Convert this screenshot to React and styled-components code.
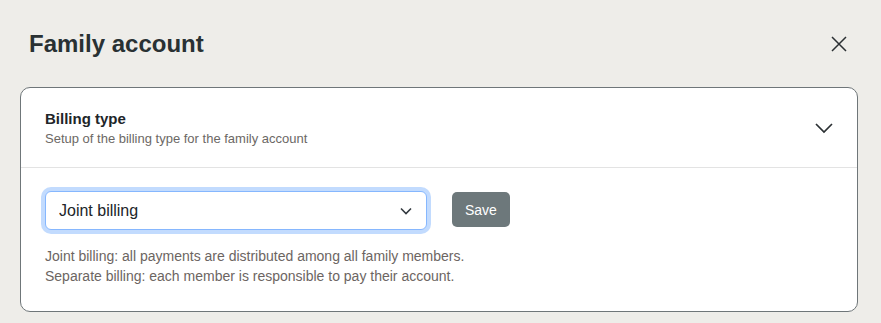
import React from 'react';
import styled, { createGlobalStyle } from 'styled-components';

const GlobalStyle = createGlobalStyle`
    body {
        margin: 0;
        background: #eeede9;
        font-family: 'Liberation Sans', Arial, sans-serif;
        color: #212529;
    }
`;

const Page = styled.div`
    padding: 0 23px 12px 20px;
`;

const TopBar = styled.header`
    display: flex;
    align-items: center;
    justify-content: space-between;
    height: 87px;
    padding: 0 9px 0 9px;
`;

const Title = styled.h1`
    margin: 0;
    font-size: 24px;
    font-weight: 700;
    color: #293133;
`;

const IconButton = styled.button`
    display: flex;
    align-items: center;
    justify-content: center;
    width: 20px;
    height: 20px;
    padding: 0;
    border: none;
    background: transparent;
    color: #2b3033;
    cursor: pointer;
`;

const Card = styled.section`
    background: #fff;
    border: 1px solid #6f7679;
    border-radius: 10px;
    overflow: hidden;
`;

const CardHeader = styled.div`
    display: flex;
    align-items: center;
    justify-content: space-between;
    height: 80px;
    padding: 0 24px;
    border-bottom: 1px solid #e3e3e3;
    box-sizing: border-box;
`;

const HeaderText = styled.div`
    display: flex;
    flex-direction: column;
    gap: 4px;
`;

const SectionTitle = styled.h2`
    margin: 0;
    font-size: 15px;
    font-weight: 700;
    color: #212529;
`;

const SectionHint = styled.p`
    margin: 0;
    font-size: 13px;
    color: #6c6865;
`;

const CardBody = styled.div`
    padding: 23px 24px 25px;
`;

const Row = styled.div`
    display: flex;
    align-items: flex-start;
    gap: 25px;
`;

const SelectWrap = styled.div`
    position: relative;
    width: 382px;
`;

const Select = styled.select`
    appearance: none;
    box-sizing: border-box;
    width: 100%;
    height: 39px;
    padding: 0 36px 0 13px;
    font-family: 'Liberation Sans', Arial, sans-serif;
    font-size: 16px;
    color: #212529;
    background: #fff;
    border: 1px solid #86b7fe;
    border-radius: 6px;
    box-shadow: 0 0 0 4px rgba(13, 110, 253, 0.25);
    outline: none;
`;

const SelectArrow = styled.svg`
    position: absolute;
    right: 15px;
    top: 50%;
    transform: translateY(-50%);
    pointer-events: none;
`;

const Button = styled.button`
    height: 35px;
    margin-top: 1px;
    padding: 0 13px;
    font-family: 'Liberation Sans', Arial, sans-serif;
    font-size: 14px;
    color: #fff;
    background: #6d787b;
    border: none;
    border-radius: 5px;
`;

const Help = styled.p`
    margin: 16px 0 0;
    font-size: 14px;
    line-height: 20px;
    color: #6c6562;
`;

const App = () => {
    return (
        <>
            <GlobalStyle />
            <Page>
                <TopBar>
                    <Title>Family account</Title>
                    <IconButton aria-label="Close">
                        <svg width="16" height="16" viewBox="0 0 16 16" fill="none" stroke="currentColor" strokeWidth="1.5">
                            <path d="M1 1L15 15M15 1L1 15" />
                        </svg>
                    </IconButton>
                </TopBar>
                <Card>
                    <CardHeader>
                        <HeaderText>
                            <SectionTitle>Billing type</SectionTitle>
                            <SectionHint>Setup of the billing type for the family account</SectionHint>
                        </HeaderText>
                        <svg width="18" height="12" viewBox="0 0 18 12" fill="none" stroke="#2b3033" strokeWidth="1.7">
                            <path d="M1 2L9 10L17 2" />
                        </svg>
                    </CardHeader>
                    <CardBody>
                        <Row>
                            <SelectWrap>
                                <Select defaultValue="joint">
                                    <option value="joint">Joint billing</option>
                                    <option value="separate">Separate billing</option>
                                </Select>
                                <SelectArrow width="12" height="8" viewBox="0 0 12 8" fill="none" stroke="#343a40" strokeWidth="1.6">
                                    <path d="M1 1.5L6 6.5L11 1.5" />
                                </SelectArrow>
                            </SelectWrap>
                            <Button>Save</Button>
                        </Row>
                        <Help>
                            Joint billing: all payments are distributed among all family members.
                            <br />
                            Separate billing: each member is responsible to pay their account.
                        </Help>
                    </CardBody>
                </Card>
            </Page>
        </>
    );
};

export default App;
